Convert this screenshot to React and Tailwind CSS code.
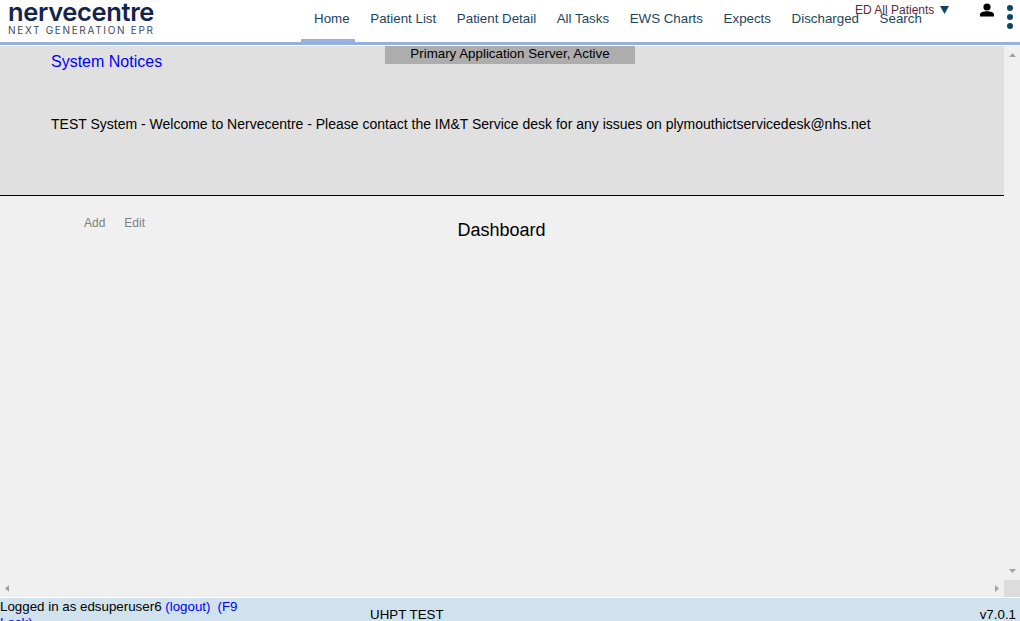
import React from "react";

const NAV = ["Home", "Patient List", "Patient Detail", "All Tasks", "EWS Charts", "Expects", "Discharged", "Search"];

const Arrow = ({ dir }) => {
  const points = {
    up: "0,4 3.5,0 7,4",
    down: "0,0 3.5,4 7,0",
    left: "4,0 0,3.5 4,7",
    right: "0,0 4,3.5 0,7",
  };
  const vertical = dir === "up" || dir === "down";
  return (
    <svg width={vertical ? 7 : 4} height={vertical ? 4 : 7} viewBox={vertical ? "0 0 7 4" : "0 0 4 7"}>
      <polygon points={points[dir]} fill="#a3a3a3" />
    </svg>
  );
};

export default function App() {
  return (
    <div className="relative flex h-[621px] w-[1020px] flex-col overflow-hidden bg-[#f0f0f0] font-['Liberation_Sans',Arial,sans-serif] text-black">
      {/* header */}
      <header className="relative flex h-[45px] shrink-0 border-b-[3px] border-[#97b1de] bg-white">
        <div className="ml-2 w-[293px] shrink-0">
          <div className="font-['Inter',sans-serif] text-[25.5px] font-semibold leading-[24px] tracking-[-0.35px] text-[#14244a]">nervecentre</div>
          <div className="font-['Inter',sans-serif] text-[10px] leading-[12px] tracking-[1.68px] text-[#3f4a5c]">NEXT GENERATION EPR</div>
        </div>
        <nav className="flex h-[42px] items-stretch text-[13.33px] text-[#1c4560]">
          {NAV.map((item, i) => (
            <a
              key={item}
              className={
                i === 0
                  ? "mr-[5px] flex h-[42px] w-[54px] items-center whitespace-nowrap border-b-[3px] border-[#97b1de] pb-[1px] pl-[13px]"
                  : "flex h-[42px] items-center whitespace-nowrap px-[10.3px] pb-[5px]"
              }
            >
              {item}
            </a>
          ))}
        </nav>

        {/* patient list picker sits over the nav */}
        <div className="absolute left-[855px] top-[2px] flex items-center gap-[6px] text-[12px] leading-[16px] text-[#5b2a44]">
          <span>ED All Patients</span>
          <svg width="9" height="8" viewBox="0 0 9 8">
            <polygon points="0,0 9,0 4.5,8" fill="#0f4560" />
          </svg>
        </div>
        <svg className="absolute left-[980px] top-[3px]" width="14" height="14" viewBox="0 0 14 14">
          <circle cx="7" cy="4" r="3.6" fill="#000" />
          <path d="M0 13.5 V11.5 C0 9.2 3.5 8.3 7 8.3 C10.5 8.3 14 9.2 14 11.5 V13.5 Z" fill="#000" />
        </svg>
        <div className="absolute left-[1007px] top-[5px] flex flex-col gap-[3px]">
          <span className="h-[6px] w-[6px] rounded-full bg-[#0f4560]" />
          <span className="h-[6px] w-[6px] rounded-full bg-[#0f4560]" />
          <span className="h-[6px] w-[6px] rounded-full bg-[#0f4560]" />
        </div>
      </header>
      <div className="h-[1px] shrink-0 bg-white" />

      {/* server status */}
      <div className="absolute left-[385px] top-[46px] z-10 flex h-[18px] w-[250px] items-center justify-center bg-[#adadad] pb-[2px] text-[13.33px] text-black">
        Primary Application Server, Active
      </div>

      {/* scrolling content */}
      <div className="flex min-h-0 flex-1 flex-col">
        <div className="flex min-h-0 flex-1">
          <main className="min-w-0 flex-1">
            <section className="h-[150px] border-b border-black bg-[#e0e0e0] pl-[51px]">
              <h2 className="pt-[6px] text-[16px] leading-[20px] text-[#0000ff]">System Notices</h2>
              <p className="mt-[42px] whitespace-nowrap text-[14px] leading-[20px]">
                TEST System - Welcome to Nervecentre - Please contact the IM&amp;T Service desk for any issues on plymouthictservicedesk@nhs.net
              </p>
            </section>
            <div className="flex pt-[20px]">
              <div className="flex w-[457.5px] gap-[19px] pl-[84px] text-[12px] leading-[14px] text-[#808080]">
                <a>Add</a>
                <a>Edit</a>
              </div>
              <h1 className="text-[18px] leading-[28px]">Dashboard</h1>
            </div>
          </main>
          <div className="flex w-[16px] shrink-0 flex-col items-center justify-between py-[7px]">
            <Arrow dir="up" />
            <Arrow dir="down" />
          </div>
        </div>
        <div className="flex h-[17px] shrink-0">
          <div className="flex flex-1 items-center justify-between px-[5px]">
            <Arrow dir="left" />
            <Arrow dir="right" />
          </div>
          <div className="w-[16px] bg-[#dcdcdc]" />
        </div>
      </div>

      {/* footer */}
      <footer className="flex h-[24px] shrink-0 border-t border-white bg-[#cfe2ee] text-[13.33px]">
        <div className="w-[370px] shrink-0 pt-[1px] leading-[16px]">
          <div className="w-[245px]">
            Logged in as edsuperuser6 <a className="text-[#0000ff]">(logout)</a>
            <a className="ml-[7px] text-[#0000ff]">(F9 Lock)</a>
          </div>
        </div>
        <div className="flex-1 pt-[9px] leading-[16px]">UHPT TEST</div>
        <div className="pr-[4px] pt-[9px] leading-[16px]">v7.0.1</div>
      </footer>
    </div>
  );
}
